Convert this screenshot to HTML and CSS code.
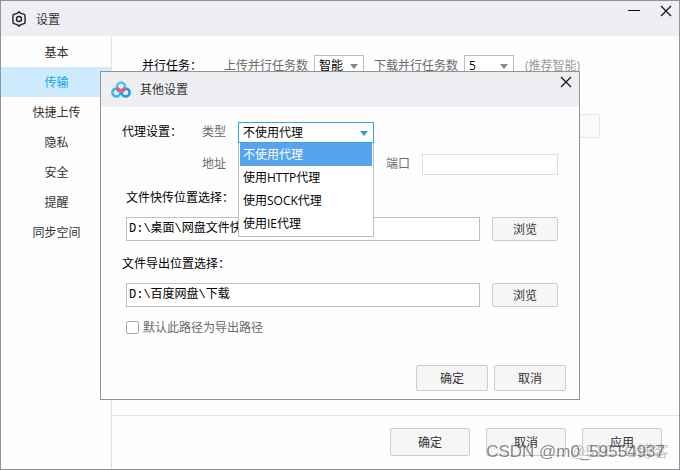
FILE: index.html
```
<!DOCTYPE html>
<html lang="zh-CN">
<head>
<meta charset="utf-8">
<title>设置</title>

<link rel="stylesheet" href="styles.css">

</head>
<body>
	<div class="window">
		<header class="titlebar">
			<svg class="gear" width="16" height="16" viewBox="0 0 16 16" fill="none" stroke="#222" stroke-width="1.4" stroke-linejoin="round">
				<path d="M8 .9l1.9 1.5 3.9 1.3.3 2.7v3.2l-.3 2.7-3.9 1.3L8 15.1l-1.9-1.5-3.9-1.3-.3-2.7V6.400l.3-2.700 3.900-1.300z"/>
				<circle cx="8" cy="8" r="2.5"/>
			</svg>
			<h1 class="title">设置</h1>
			<div class="window-buttons">
				<button type="button" class="icon-button" aria-label="最小化">
					<svg width="12" height="12" viewBox="0 0 12 12" stroke="#111" stroke-width="1"><path d="M0 5.500h12"/></svg>
				</button>
				<button type="button" class="icon-button" aria-label="关闭">
					<svg width="12" height="12" viewBox="0 0 12 12" stroke="#111" stroke-width="1.2"><path d="M1 1l10 10M11 1L1 11"/></svg>
				</button>
			</div>
		</header>

		<div class="window-body">
			<nav class="sidebar">
				<a href="#" class="tab">基本</a>
				<a href="#" class="tab active">传输</a>
				<a href="#" class="tab">快捷上传</a>
				<a href="#" class="tab">隐私</a>
				<a href="#" class="tab">安全</a>
				<a href="#" class="tab">提醒</a>
				<a href="#" class="tab">同步空间</a>
			</nav>

			<main class="main">
				<div class="content">
					<div class="tasks">
						<span class="tasks-name">并行任务：</span>
						<label class="muted" for="upload">上传并行任务数</label>
						<div class="select small">
							<select id="upload"><option>智能</option></select>
						</div>
						<label class="muted download" for="download">下载并行任务数</label>
						<div class="select small">
							<select id="download"><option>5</option></select>
						</div>
						<span class="hint">(推荐智能)</span>
					</div>
					<div class="folder">
						<input type="text" class="text path" aria-label="下载位置" disabled>
						<button type="button" class="button browse" aria-label="浏览" disabled></button>
					</div>
				</div>
				<footer class="footer">
					<button type="button" class="button large">确定</button>
					<button type="button" class="button large">取消</button>
					<button type="button" class="button large">应用</button>
				</footer>
			</main>
		</div>
	</div>

	<div class="overlay">
		<section class="dialog" role="dialog" aria-labelledby="dialog-title">
			<header class="titlebar">
				<svg class="logo" width="20" height="17" viewBox="0 0 20 17" fill="none" stroke-width="2.6">
					<circle cx="5.300" cy="11.500" r="3.900" stroke="#35b6f5"/>
					<circle cx="14.700" cy="11.500" r="3.900" stroke="#1c9bf0"/>
					<circle cx="10" cy="5.500" r="4" stroke="#4cc4f3"/>
					<path d="M6.200 6.500a4 4 0 0 0 7.600 0M7.700 8.800L6 10.200M12.300 8.800l1.700 1.400" stroke="#f0586a"/>
				</svg>
				<h2 class="title" id="dialog-title">其他设置</h2>
				<div class="window-buttons">
					<button type="button" class="icon-button" aria-label="关闭">
						<svg width="12" height="12" viewBox="0 0 12 12" stroke="#111" stroke-width="1.2"><path d="M1 1l10 10M11 1L1 11"/></svg>
					</button>
				</div>
			</header>

			<form class="dialog-body">
				<div class="proxy">
					<span class="proxy-name">代理设置：</span>
					<label class="muted" for="type">类型</label>
					<div class="select open">
						<select id="type">
							<option>不使用代理</option>
							<option>使用HTTP代理</option>
							<option>使用SOCK代理</option>
							<option>使用IE代理</option>
						</select>
						<ul class="options">
							<li class="option selected">不使用代理</li>
							<li class="option">使用HTTP代理</li>
							<li class="option">使用SOCK代理</li>
							<li class="option">使用IE代理</li>
						</ul>
					</div>
					<label class="muted address" for="address">地址</label>
					<input type="text" class="text pale" id="address">
					<label class="muted port" for="port">端口</label>
					<input type="text" class="text pale" id="port">
				</div>

				<label class="heading indent" for="transfer">文件快传位置选择：</label>
				<div class="folder">
					<input type="text" class="text path" id="transfer" value="D:\桌面\网盘文件快传">
					<button type="button" class="button browse">浏览</button>
				</div>

				<label class="heading" for="export">文件导出位置选择：</label>
				<div class="folder">
					<input type="text" class="text path" id="export" value="D:\百度网盘\下载">
					<button type="button" class="button browse">浏览</button>
				</div>

				<label class="check muted">
					<input type="checkbox" class="checkbox">
					默认此路径为导出路径
				</label>

				<div class="dialog-buttons">
					<button type="button" class="button">确定</button>
					<button type="button" class="button">取消</button>
				</div>
			</form>
		</section>
	</div>

	<div class="watermark site">@51CTO博客</div>
	<div class="watermark author">CSDN @m0_59554937</div>
</body>
</html>
```
FILE: styles.css
```
* {
	box-sizing: border-box;
}

body {
	margin: 0;
	font: 12px/18px "Open Sans", "Noto Sans CJK SC", sans-serif;
	color: #333;
}

button, input, select {
	font: inherit;
	color: inherit;
	margin: 0;
}

.window {
	display: flex;
	flex-direction: column;
	min-height: 100vh;
	border: 1px solid #919296;
	background: #fefefe;
}

.titlebar {
	display: flex;
	align-items: center;
	height: 35px;
	padding-left: 10px;
	background: #eeeff3;
}

.title {
	margin: 0 0 0 9px;
	padding-top: 2px;
	font-size: 12px;
	font-weight: normal;
}

.window-buttons {
	display: flex;
	align-self: flex-start;
	gap: 12px;
	margin-left: auto;
	padding-right: 3px;
}

.icon-button {
	display: flex;
	align-items: center;
	justify-content: center;
	width: 20px;
	height: 20px;
	padding: 0;
	border: 0;
	background: none;
}

.window-body {
	display: flex;
	flex: 1;
}

.sidebar {
	width: 111px;
	padding-top: 1px;
	border-right: 1px solid #e3e4e6;
}

.tab {
	display: block;
	padding: 2px 0 0 1px;
	line-height: 28px;
	text-align: center;
	color: #333;
	text-decoration: none;
}

.tab.active {
	color: #0ea5f0;
	background: #cfebff;
}

.main {
	display: flex;
	flex: 1;
	flex-direction: column;
}

.content {
	flex: 1;
	padding: 19px 30px;
}

.content .folder {
	width: 458px;
	margin-top: 38px;
}

.tasks {
	display: flex;
	align-items: center;
}

.tasks-name {
	width: 82px;
	color: #000;
}

.muted {
	color: #6a6a6a;
}

.download {
	margin-left: 10px;
}

.hint {
	margin-left: 11px;
	color: #999;
}

.select {
	position: relative;
}

.select select {
	display: block;
	width: 100%;
	height: 21px;
	padding: 1px 4px 0;
	border: 1px solid #bcbdbf;
	border-radius: 0;
	color: #000;
	background: #fff;
	appearance: none;
}

/* drop-down arrow */
.select::after {
	content: "";
	position: absolute;
	top: 9px;
	right: 6px;
	border: 4px solid transparent;
	border-top: 5px solid #888;
	border-bottom: 0;
	pointer-events: none;
}

.small {
	width: 50px;
	margin-left: 6px;
}

.open select {
	border-color: #39a5d8;
}

.open::after {
	border-top-color: #2d9fdb;
}

.options {
	position: absolute;
	top: 21px;
	left: 0;
	right: 0;
	margin: 0;
	padding: 0 1px 1px;
	list-style: none;
	border: 1px solid #b0c3d4;
	border-top: 0;
	background: #fff;
}

.option {
	padding-left: 3px;
	line-height: 23px;
	color: #000;
}

.option.selected {
	color: #fff;
	background: #56a4ef;
}

.text {
	min-width: 0;
	height: 21px;
	padding: 0 2px;
	border: 1px solid #b2c4d6;
	background: #fff;
}

.pale {
	border-color: #dcdee0;
}

.button {
	width: 72px;
	height: 26px;
	padding: 2px 0 0;
	border: 1px solid #cbcccd;
	border-radius: 2px;
	background: #f6f6f6;
}

.button:disabled, .text:disabled {
	border-color: #e6e6e6;
	background: #fafafa;
}

.button.large {
	width: 80px;
	height: 28px;
}

.button.browse {
	width: 66px;
	height: 24px;
}

.footer {
	display: flex;
	justify-content: flex-end;
	gap: 16px;
	padding: 12px 17px 13px;
	border-top: 1px solid #e3e4e6;
}

.overlay {
	position: fixed;
	inset: 0;
	display: flex;
	align-items: center;
	justify-content: center;
}

.dialog {
	width: 480px;
	border: 1px solid #919296;
	background: #fefefe;
}

.dialog-body {
	display: flex;
	flex-direction: column;
	padding: 15px 21px 8px;
}

.proxy {
	display: grid;
	grid-template-columns: 80px 36px 136px 48px 136px;
	row-gap: 11px;
	align-items: center;
}

.proxy-name {
	color: #000;
}

.address {
	grid-column: 2;
}

.port {
	padding-left: 12px;
}

.heading {
	margin-top: 14px;
	color: #000;
}

.indent {
	padding-left: 4px;
}

.folder {
	display: flex;
	gap: 12px;
	margin-top: 10px;
	padding-left: 4px;
}

.path {
	flex: 1;
	height: 24px;
	padding-bottom: 4px;
	font-family: "Liberation Mono", "Noto Sans CJK SC", monospace;
	color: #000;
}

.check {
	display: flex;
	align-items: center;
	gap: 4px;
	margin-top: 12px;
	padding-left: 4px;
}

.checkbox {
	width: 13px;
	height: 13px;
	border: 1px solid #aaa;
	border-radius: 2px;
	background: #fff;
	appearance: none;
}

.dialog-buttons {
	display: flex;
	justify-content: flex-end;
	gap: 6px;
	margin: 28px -8px 0 0;
}

.watermark {
	position: fixed;
	bottom: 8px;
	font-family: "Liberation Sans", "Noto Sans CJK SC", sans-serif;
	line-height: 20px;
	pointer-events: none;
}

.site {
	right: 11px;
	font-size: 16px;
	color: rgba(120, 120, 120, 0.4);
}

.author {
	right: 15px;
	font-size: 17px;
	color: rgba(90, 90, 90, 0.7);
}
```
